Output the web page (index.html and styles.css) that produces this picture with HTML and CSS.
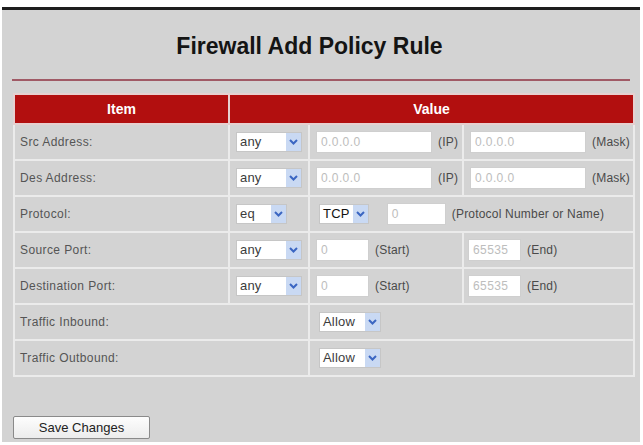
FILE: index.html
```html
<!DOCTYPE html>
<html lang="en">
<head>
    <meta charset="UTF-8">
    <title>Firewall Add Policy Rule</title>
    <link rel="stylesheet" href="styles.css">
</head>
<body>
    <div class="page">
        <h1>Firewall Add Policy Rule</h1>
        <div class="rule"></div>

        <table class="policy">
            <colgroup>
                <col class="c-item">
                <col class="c-sel">
                <col class="c-a">
                <col class="c-b">
            </colgroup>
            <tr>
                <th>Item</th>
                <th colspan="3">Value</th>
            </tr>
            <tr>
                <td>Src Address:</td>
                <td><span class="sel w-any"><span class="txt">any</span><span class="arr"><svg width="9" height="6" viewBox="0 0 9 6"><path d="M1 1 L4.5 4.5 L8 1" fill="none" stroke="#3b66c2" stroke-width="2"/></svg></span></span></td>
                <td><span class="inp w-ip">0.0.0.0</span><span class="note">(IP)</span></td>
                <td><span class="inp w-ip">0.0.0.0</span><span class="note">(Mask)</span></td>
            </tr>
            <tr>
                <td>Des Address:</td>
                <td><span class="sel w-any"><span class="txt">any</span><span class="arr"><svg width="9" height="6" viewBox="0 0 9 6"><path d="M1 1 L4.5 4.5 L8 1" fill="none" stroke="#3b66c2" stroke-width="2"/></svg></span></span></td>
                <td><span class="inp w-ip">0.0.0.0</span><span class="note">(IP)</span></td>
                <td><span class="inp w-ip">0.0.0.0</span><span class="note">(Mask)</span></td>
            </tr>
            <tr>
                <td>Protocol:</td>
                <td><span class="sel w-eq"><span class="txt">eq</span><span class="arr"><svg width="9" height="6" viewBox="0 0 9 6"><path d="M1 1 L4.5 4.5 L8 1" fill="none" stroke="#3b66c2" stroke-width="2"/></svg></span></span></td>
                <td colspan="2" class="proto">
                    <span class="sel w-tcp"><span class="txt dark">TCP</span><span class="arr"><svg width="9" height="6" viewBox="0 0 9 6"><path d="M1 1 L4.5 4.5 L8 1" fill="none" stroke="#3b66c2" stroke-width="2"/></svg></span></span>
                    <span class="inp w-num">0</span><span class="note">(Protocol Number or Name)</span>
                </td>
            </tr>
            <tr>
                <td>Source Port:</td>
                <td><span class="sel w-any"><span class="txt">any</span><span class="arr"><svg width="9" height="6" viewBox="0 0 9 6"><path d="M1 1 L4.5 4.5 L8 1" fill="none" stroke="#3b66c2" stroke-width="2"/></svg></span></span></td>
                <td><span class="inp w-port">0</span><span class="note">(Start)</span></td>
                <td class="endcell"><span class="inp w-port">65535</span><span class="note">(End)</span></td>
            </tr>
            <tr>
                <td>Destination Port:</td>
                <td><span class="sel w-any"><span class="txt">any</span><span class="arr"><svg width="9" height="6" viewBox="0 0 9 6"><path d="M1 1 L4.5 4.5 L8 1" fill="none" stroke="#3b66c2" stroke-width="2"/></svg></span></span></td>
                <td><span class="inp w-port">0</span><span class="note">(Start)</span></td>
                <td class="endcell"><span class="inp w-port">65535</span><span class="note">(End)</span></td>
            </tr>
            <tr>
                <td colspan="2">Traffic Inbound:</td>
                <td colspan="2" class="proto"><span class="sel w-allow"><span class="txt">Allow</span><span class="arr"><svg width="9" height="6" viewBox="0 0 9 6"><path d="M1 1 L4.5 4.5 L8 1" fill="none" stroke="#3b66c2" stroke-width="2"/></svg></span></span></td>
            </tr>
            <tr>
                <td colspan="2">Traffic Outbound:</td>
                <td colspan="2" class="proto"><span class="sel w-allow"><span class="txt">Allow</span><span class="arr"><svg width="9" height="6" viewBox="0 0 9 6"><path d="M1 1 L4.5 4.5 L8 1" fill="none" stroke="#3b66c2" stroke-width="2"/></svg></span></span></td>
            </tr>
        </table>

        <button class="save">Save Changes</button>
    </div>
</body>
</html>
```

FILE: styles.css
```css
body {
    margin: 0;
    background: #fff;
    font-family: 'Liberation Sans', Arial, sans-serif;
}

.page {
    margin: 7px 3px 0 2px;
    border-top: 3px solid #1e1e1e;
    background: #d3d3d3;
    height: 435px;
    box-sizing: border-box;
    padding: 0 8px 0 11px;
}

h1 {
    margin: 0;
    padding: 24px 26px 0 0;
    font-size: 23px;
    line-height: 25px;
    text-align: center;
    color: #141414;
}

.rule {
    height: 2px;
    margin: 20px 2px 0 -1px;
    background: #a05a66;
}

.policy {
    margin-top: 12px;
    width: 620px;
    border-collapse: collapse;
    table-layout: fixed;
    font-size: 12px;
    letter-spacing: 0.4px;
    color: #555;
}

.c-item { width: 215px; }
.c-sel { width: 80px; }
.c-a { width: 154px; }
.c-b { width: 171px; }

.policy th {
    background: #b20f0f;
    color: #fff;
    font-size: 14px;
    letter-spacing: 0;
    height: 26px;
    border: 2px solid #e6d0d0;
}

.policy td {
    height: 34px;
    border: 2px solid #ebebeb;
    padding: 0 0 0 6px;
    white-space: nowrap;
}

.policy td:first-child {
    padding-left: 5px;
}

.proto {
    padding-left: 9px !important;
}

.endcell {
    padding-left: 4px !important;
}

.sel {
    display: inline-flex;
    vertical-align: middle;
    height: 20px;
    background: #fff;
    border: 1px solid #c6c6c6;
    box-sizing: border-box;
    letter-spacing: 0.2px;
}

.sel .txt {
    flex: 1;
    font-size: 13px;
    line-height: 18px;
    padding-left: 3px;
    color: #3c3c3c;
}

.sel .txt.dark {
    color: #111;
}

.sel .arr {
    width: 15px;
    background: #c9d9f3;
    display: flex;
    align-items: center;
    justify-content: center;
}

.w-any { width: 66px; }
.w-eq { width: 51px; }
.w-tcp { width: 50px; margin-right: 14px; }
.w-allow { width: 62px; }

.inp {
    display: inline-block;
    vertical-align: middle;
    height: 22px;
    line-height: 20px;
    box-sizing: border-box;
    background: #fff;
    border: 1px solid #cfcfcf;
    padding-left: 4px;
    color: #bdbdbd;
    font-size: 12px;
}

.w-ip { width: 116px; }
.w-num { width: 59px; }
.w-port { width: 53px; }

.note {
    vertical-align: middle;
    margin-left: 6px;
    letter-spacing: 0.2px;
    color: #4a4a4a;
}

.save {
    margin-top: 39px;
    width: 137px;
    height: 23px;
    font-family: 'Liberation Sans', Arial, sans-serif;
    font-size: 13px;
    color: #222;
    background: linear-gradient(#fdfdfd, #ececec);
    border: 1px solid #8a8a8a;
    border-radius: 2px;
}
```
